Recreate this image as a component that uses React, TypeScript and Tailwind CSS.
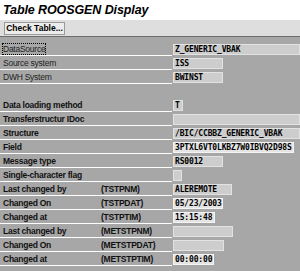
import React from "react";

type Row = {
  label?: string;
  tech?: string;
  value?: string;
  width?: number;
  bright?: boolean;
  bold?: boolean;
  focus?: boolean;
};

const rows: Row[] = [
  { label: "DataSource", value: "Z_GENERIC_VBAK", width: 127, focus: true },
  { label: "Source system", value: "ISS", width: 50 },
  { label: "DWH System", value: "BWINST", width: 50 },
  {},
  { label: "Data loading method", value: "T", width: 10, bold: true },
  { label: "Transferstructur IDoc", value: "", width: 127, bold: true },
  { label: "Structure", value: "/BIC/CCBBZ_GENERIC_VBAK", width: 127, bold: true },
  { label: "Field", value: "3PTXL6VT0LKBZ7W0IBVQ2D98S", width: 121, bold: true, bright: true },
  { label: "Message type", value: "RS0012", width: 50, bold: true },
  { label: "Single-character flag", value: "", width: 9, bold: true },
  { label: "Last changed by", tech: "(TSTPNM)", value: "ALEREMOTE", width: 59 },
  { label: "Changed On", tech: "(TSTPDAT)", value: "05/23/2003", width: 50, bold: true, bright: true },
  { label: "Changed at", tech: "(TSTPTIM)", value: "15:15:48", width: 42, bold: true, bright: true },
  { label: "Last changed by", tech: "(METSTPNM)", value: "", width: 60 },
  { label: "Changed On", tech: "(METSTPDAT)", value: "", width: 51 },
  { label: "Changed at", tech: "(METSTPTIM)", value: "00:00:00", width: 41, bold: true, bright: true },
];

export default function App() {
  return (
    <div className="w-[300px] h-[271px] overflow-hidden bg-[#a7a7a7] font-['Liberation_Sans',Arial,sans-serif]">
      {/* title */}
      <div className="h-[20px] bg-white px-[3px] pt-[2px] text-[12.5px] leading-[16px] font-bold italic text-black tracking-[-0.1px]">
        Table ROOSGEN Display
      </div>

      {/* toolbar */}
      <div className="h-[17px] bg-[#dedede] border-b border-[#6c6c6c] pl-[4px] pt-[2px]">
        <div className="w-[61px] h-[13px] bg-[#ececec] border border-[#9a9a9a] text-[8.5px] leading-[11px] font-bold text-black text-center">
          Check Table...
        </div>
      </div>

      {/* fields */}
      <div className="pt-[5px]">
        {rows.map((r, i) => (
          <div key={i} className="flex h-[14px]">
            <div
              className={`w-[172px] flex items-center pl-[3px] text-[8.5px] leading-[10px] tracking-[-0.25px] ${
                r.label ? "border-b border-white" : ""
              }`}
            >
              <div
                className={`w-[98px] ${
                  r.bold || r.tech ? "font-bold text-[#111]" : "text-[#222]"
                }`}
              >
                <span className={r.focus ? "outline outline-1 outline-dotted outline-black" : ""}>
                  {r.label}
                </span>
              </div>
              {r.tech && <span className="font-bold text-[#111]">{r.tech}</span>}
            </div>
            {r.value !== undefined && (
              <div className="pt-[2px] pl-[1px]">
                <div
                  style={{ width: r.width }}
                  className={`h-[11px] border px-[1px] font-['DejaVu_Sans_Mono',monospace] text-[8px] leading-[9px] tracking-[-0.15px] font-bold text-black whitespace-nowrap overflow-hidden ${
                    r.bright
                      ? "bg-[#e4e4e4] border-[#f4f4f4]"
                      : "bg-[#cdcdcd] border-[#e2e2e2]"
                  }`}
                >
                  {r.value}
                </div>
              </div>
            )}
          </div>
        ))}
      </div>
    </div>
  );
}
